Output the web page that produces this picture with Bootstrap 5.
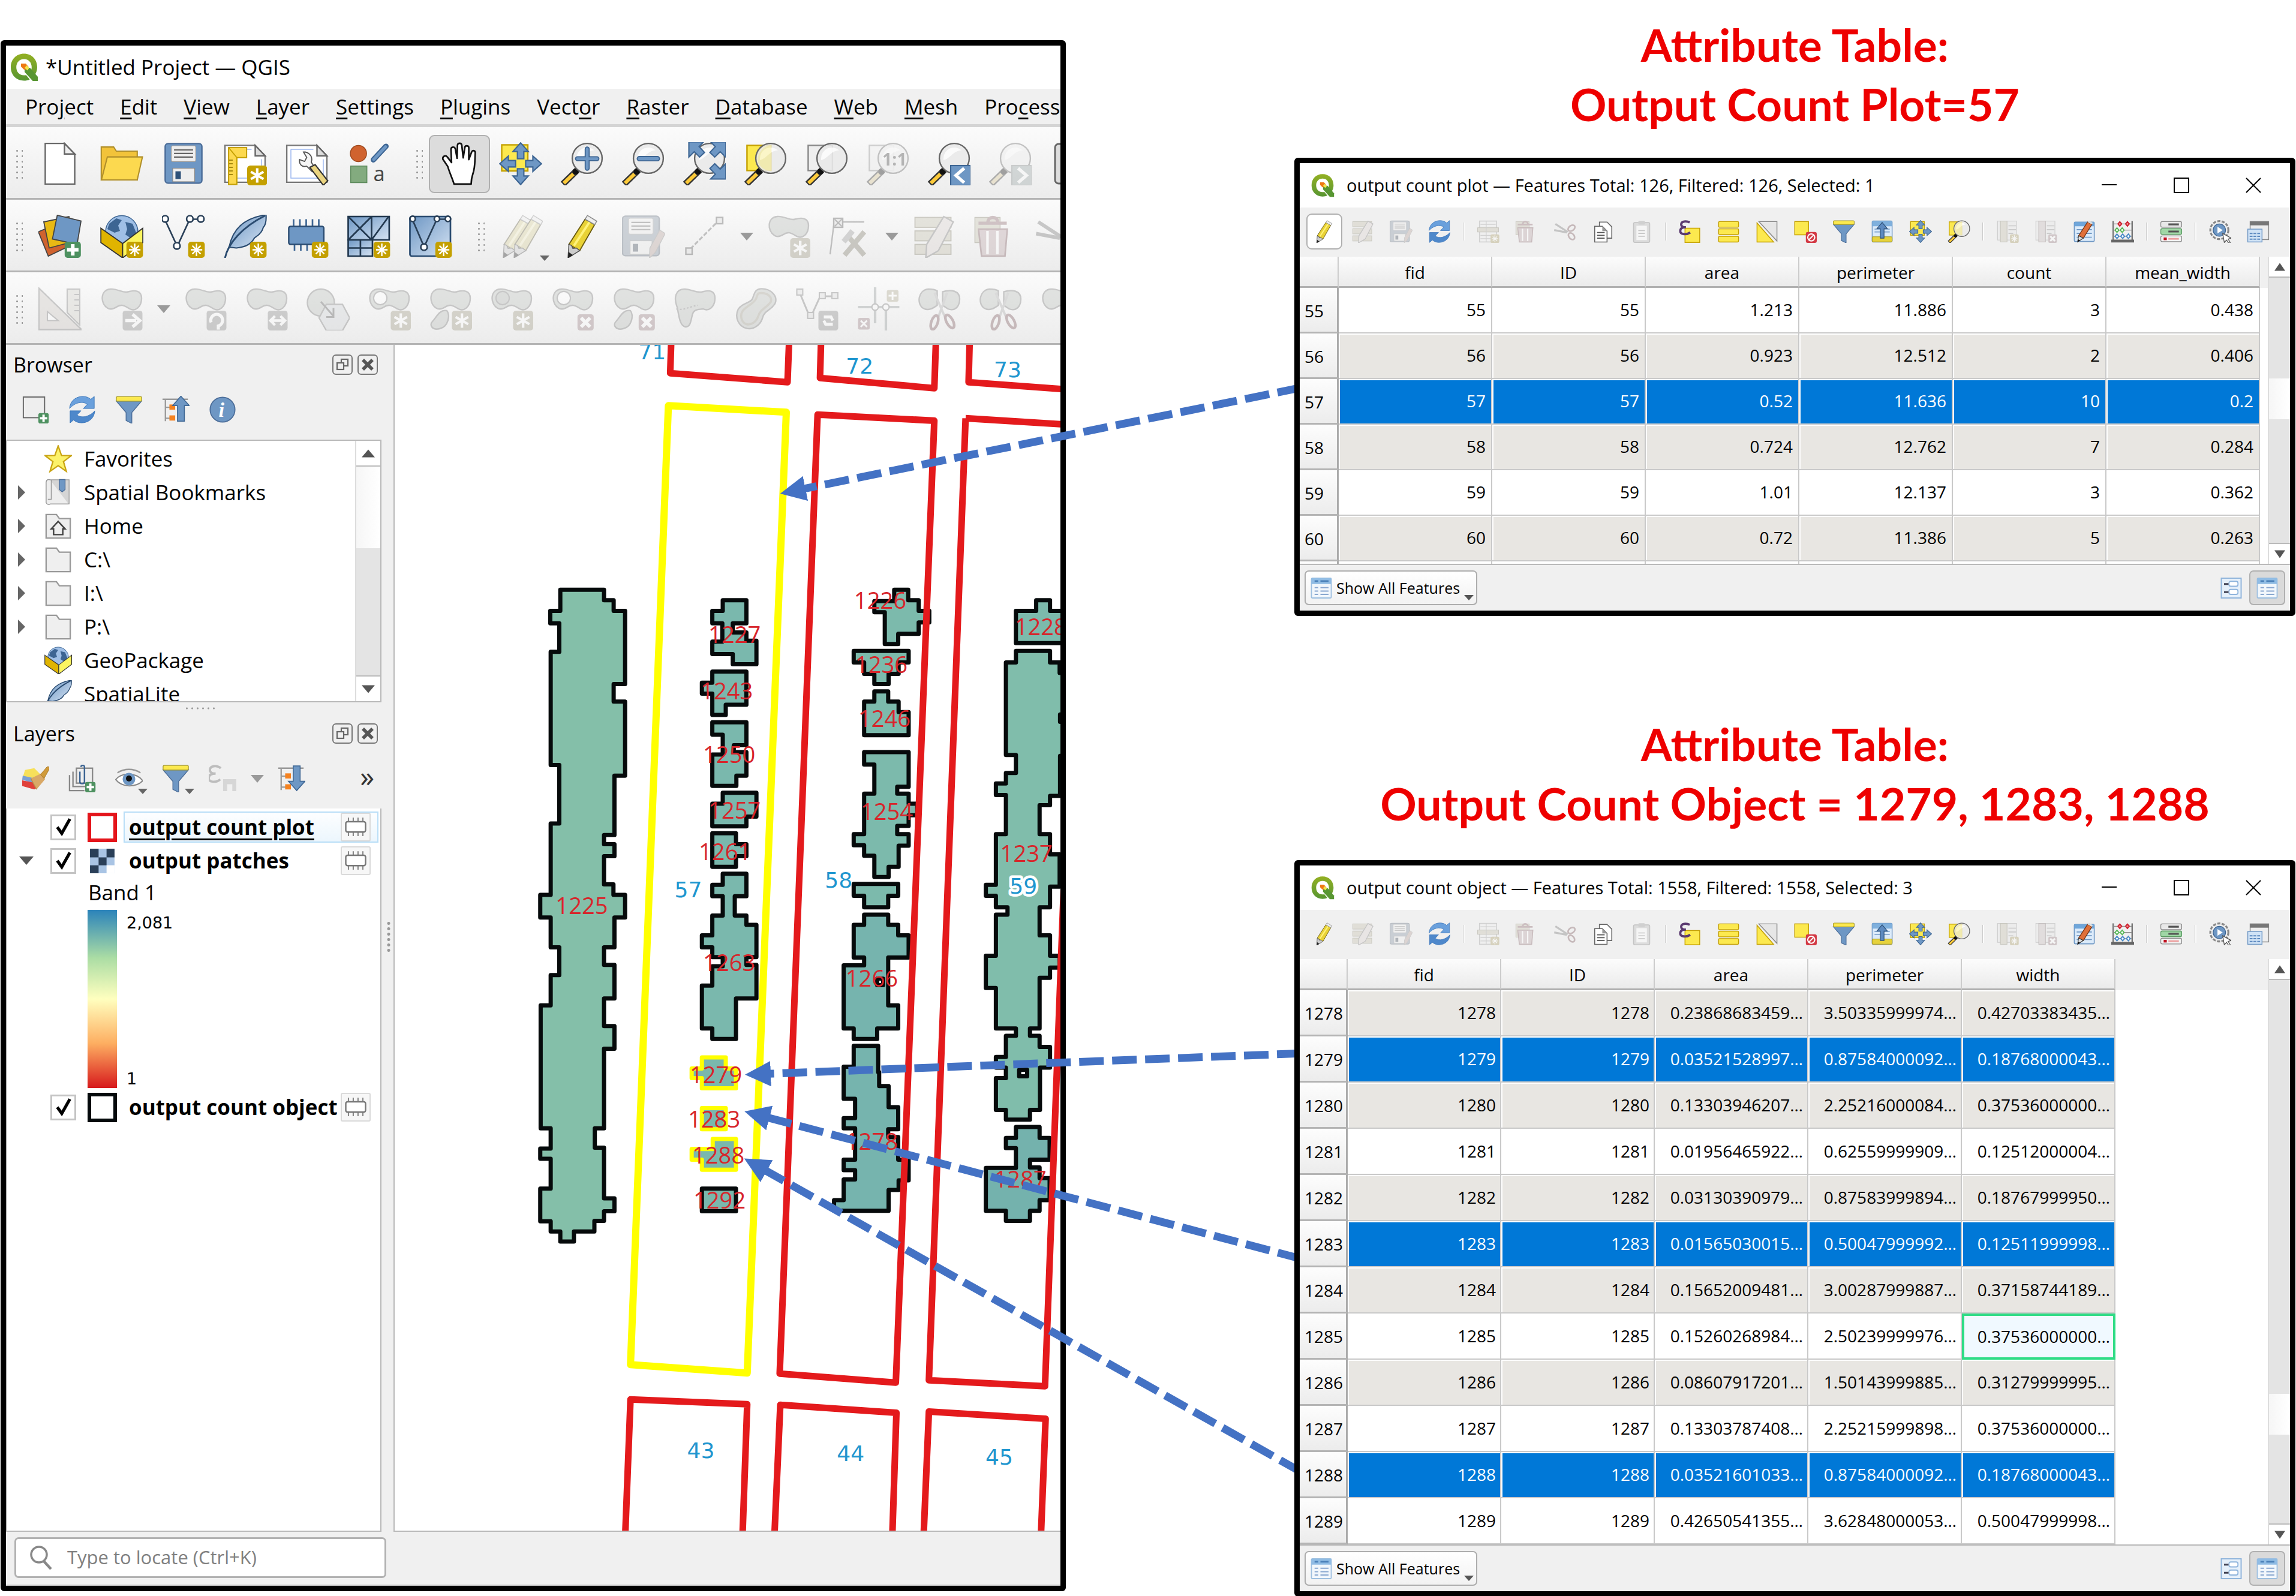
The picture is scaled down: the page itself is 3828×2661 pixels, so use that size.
<!DOCTYPE html>
<html lang="en">
<head>
<meta charset="utf-8">
<meta name="viewport" content="width=device-width, initial-scale=1">
<title>QGIS attribute tables</title>
<link rel="stylesheet" href="https://cdn.jsdelivr.net/npm/bootstrap@5.3.0/dist/css/bootstrap.min.css">
<script src="https://cdn.jsdelivr.net/npm/bootstrap@5.3.0/dist/js/bootstrap.bundle.min.js"></script>
<style>
:root{--face:#f0f0f0;--line:#b9b9b9}
body{font-family:"Open Sans","Noto Sans",sans-serif;font-size:35px;line-height:1.2;color:#000;background:#fff}
svg{display:block;overflow:visible}
button{color:inherit;font:inherit}
.stage{min-height:100vh}
.frame{border:9px solid #000;border-radius:6px;background:var(--face);overflow:hidden}
.main-win{width:46.4%;margin:67px 0 13px 1px}
.side-col{width:43.6%;margin:0 1px 4px auto;z-index:2}
.links{z-index:1;pointer-events:none}
.titlebar{height:72px;background:#fff;padding-left:6px;gap:12px}
.titlebar svg{width:48px;height:48px}
.menubar{height:64px;padding-left:10px;border-bottom:5px solid #d4d4d4}
.menubar a{color:#000;padding:0 22px;text-decoration:none;white-space:nowrap}
.menubar u{text-underline-offset:5px;text-decoration-thickness:3px}
.bar{height:121px;background:linear-gradient(#fbfbfb,#ececec);border-bottom:3px solid #b4b4b4;padding:4px 0 0 14px}
.grip{width:14px;height:52px;flex:none;margin:0 10px 0 0;background:radial-gradient(circle,#999 1px,transparent 2px) 0 0/9px 9px}
.grip.mid{margin:0 10px 0 25px}
.tb{width:103px;height:97px;flex:none;border:0;background:none;padding:0;display:flex;align-items:center;justify-content:center;position:relative}
.tb.tight{width:102px}
.tb svg{width:72px;height:72px}
.tb.on{background:#dcdcdc;border:2px solid #b0b0b0;border-radius:9px}
.dim{opacity:.36;filter:saturate(.35)}
.tri{width:38px;flex:none;display:flex;justify-content:center}
.tri::after,.corner::after{content:"";border:11px solid transparent;border-top:13px solid #9a9a9a;border-bottom:0}
.corner::after{position:absolute;right:4px;bottom:8px;border-width:8px;border-top:9px solid #666;border-bottom:0}
.dock{width:648px;flex:none;border-right:2px solid var(--line)}
.dock-title{height:66px;padding:0 26px 0 12px;gap:8px;font-size:34px}
.dock-title button{width:34px;height:34px;border:2px solid #777;border-radius:6px;padding:3px;background:none}
.dock-title button svg{width:24px;height:24px}
.dock-bar{height:92px;padding:0 24px 8px 10px}
.dock-bar .tb{width:78px;height:60px}
.dock-bar .tb svg{width:46px;height:46px}
.dock-bar .corner::after{right:8px;bottom:4px}
.dock-bar .tri{width:37px}
.more{font-size:48px;line-height:60px;color:#333;padding:0 8px 8px 0}
.treebox{background:#fff;border:2px solid var(--line);margin-right:20px;overflow:hidden}
.browser-tree{height:438px}
.tree{list-style:none;margin:0;padding:2px 0 0}
.tree li{height:56px;display:flex;align-items:center;white-space:nowrap}
.tree .twist{width:62px;padding-left:18px;flex:none}
.tree .twist svg{width:12px;height:24px}
.tree .ico{width:46px;height:46px;margin-right:20px;flex:none}
.sbar{width:42px;flex:none;background:#f4f4f4;border-left:2px solid #ddd}
.sbar span{display:block}
.sbtn{height:43px;background:#fff;border-bottom:2px solid #bbb;position:relative}
.sbtn::after{content:"";position:absolute;left:50%;top:50%;transform:translate(-50%,-50%);border:11px solid transparent;border-bottom:13px solid #555;border-top:0}
.sbtn.down{border-bottom:0;border-top:2px solid #bbb}
.sbtn.down::after{border:11px solid transparent;border-top:13px solid #555;border-bottom:0}
.groove{background:#e4e4e4}
.thumb{background:linear-gradient(90deg,#f6f6f6,#fff)}
.split-h{height:19px;margin:0 auto;width:52px;background:radial-gradient(circle,#999 1px,transparent 2px) 0 4px/9px 12px repeat-x}
.split-v{right:3px;top:960px;width:10px;height:56px;background:radial-gradient(circle,#999 2px,transparent 3px) 0 0/10px 9px}
.layers-tree{border-top:0;padding-top:3px}
.lrow{height:56px;display:flex;align-items:center}
.lrow .twist{width:72px;padding-left:20px;flex:none}
.lrow .twist svg{width:24px;height:14px}
.lrow input{appearance:none;width:43px;height:43px;border:3px solid #c4c4c4;background:#fff;margin:0 19px 0 0;flex:none}
.lrow input:checked{background:#fff url("data:image/svg+xml,%3Csvg xmlns='http://www.w3.org/2000/svg' viewBox='0 0 24 24'%3E%3Cpath d='M5 12l5 7 9-16' fill='none' stroke='%23000' stroke-width='3.4'/%3E%3C/svg%3E") center/36px no-repeat}
.swatch{width:49px;height:49px;flex:none;margin-right:11px}
.sq-red{border:6px solid #e4151b}
.sq-black{border:6px solid #050a0c}
.lname{flex:1;min-width:0;height:52px;margin-right:3px;padding:0 11px 0 7px;font-weight:700;border:2px solid transparent;display:flex;align-items:center;justify-content:space-between;white-space:nowrap}
.lname.cur{border-color:#b9def7;background:linear-gradient(#fdfeff,#ecf6fd)}
.lname.cur label{text-decoration:underline;text-underline-offset:6px;text-decoration-thickness:3px}
.memchip{width:50px;height:48px;flex:none;border:2px solid #dadada;border-radius:3px;background:#f7f7f7;padding:4px}
.memchip svg{width:38px;height:36px}
.band{height:54px;padding:4px 0 0 135px}
.ramp{height:297px;margin:0 0 4px 134px;gap:16px;font:27px/1 "DejaVu Sans",sans-serif}
.ramp i{width:49px;background:linear-gradient(#2b83ba,#abdda4 27%,#ffffbf 50%,#fdae61 75%,#d7191c)}
.ramp div{padding:8px 0 2px}
.mapview{background:#fff;border-bottom:2px solid var(--line);overflow:hidden;min-width:0;min-height:0}
.status{height:90px;padding:0 0 2px 14px;border-bottom:2px solid #c4c4c4}
.locate{width:620px;height:68px;background:#fff;border:3px solid #b2b2b2;border-radius:7px;padding:0 22px;gap:25px}
.locate svg{width:38px;height:40px;flex:none}
.locate input{border:0;outline:0;font-size:31px;width:100%;padding:0;background:none}
.locate input::placeholder{color:#808080;opacity:1}
.banner{font:700 75px/99px Lato,"Open Sans",sans-serif;color:#ee0000;text-align:center;margin:25px 0 40px}
.banner.second{margin:164px 0 45px}
.tw-title{height:74px;background:#fff;padding:0 48px 0 16px;font-size:29px;gap:18px}
.tw-title .logo{width:44px;height:40px}
.tw-title button{border:0;background:none;padding:0;margin-left:76px}
.tw-title button svg{width:26px;height:26px}
.tw-bar{height:82px;padding:0 0 3px 9px}
.tw-bar .tb{width:64px;height:60px}
.tw-bar .tb.on{background:#fff;width:60px;margin:0 2px}
.tw-bar .tb svg{width:38px;height:38px}
.vsep{width:3px;height:30px;background:#fafafa;border-left:1px solid #ccc;margin:0 7px;flex:none}
.gridwrap{background:#fff;border-bottom:2px solid var(--line);overflow:hidden;min-height:0}
.gridwrap.short{height:514px}
.gridbox{background:linear-gradient(var(--face) 52px,#fff 52px);overflow:hidden}
.attrs{table-layout:fixed;border-collapse:separate;border-spacing:0;width:0;font-size:28px;white-space:nowrap}
.attrs .rh{width:65px}
.attrs.wide .rh{width:80px}
.attrs .cc{width:256px}
.attrs thead th{height:52px;padding:4px 0 0;font-weight:400;text-align:center;background:linear-gradient(#fcfcfc,#ebebeb);border-right:2px solid #ccc;border-bottom:3px solid #b0b0b0}
.attrs tbody th{height:76px;font-weight:400;padding:4px 0 0 8px;background:linear-gradient(#fdfdfd,#ececec);border-right:3px solid #aaa;border-bottom:3px solid #b4b4b4}
.attrs td{height:76px;padding:0 9px 0 0;text-align:right;border-right:2px solid #c9c9c9;border-bottom:2px solid #c9c9c9;box-shadow:inset 2px 2px #fff;overflow:hidden}
.attrs.wide tbody th,.attrs.wide td{height:77px}
.attrs.wide td{padding-right:7px}
.attrs .alt td{background:#e8e6e2}
.attrs .sel td{background:#0078d7;color:#fff}
.attrs.wide td.focus-cell{border:4px solid #2fdc86;background:#f0f9ff;padding-right:5px;box-shadow:none}
.tw-foot{height:76px;padding:0 8px}
.showall{height:58px;width:288px;border:2px solid #adadad;border-radius:7px;background:linear-gradient(#fff,#f2f2f2);font-size:25px;padding:0 8px;gap:7px;position:relative;white-space:nowrap}
.showall svg,.viewb svg{width:36px;height:37px}
.showall::after{content:"";position:absolute;right:4px;bottom:6px;border:8px solid transparent;border-top:9px solid #555;border-bottom:0}
.viewb{width:60px;height:58px;border:2px solid transparent;border-radius:7px;background:none;padding:0 10px}
.viewb.on{background:#dadada;border-color:#b0b0b0}
.gridwrap .sbar{width:37px}
.gridwrap .sbtn{height:35px}
.gridwrap .sbtn::after{border-left-width:9px;border-right-width:9px}
.num{font:38px "Open Sans",sans-serif;fill:#d7252b;text-anchor:middle}
.plotno{font:36px "DejaVu Sans",sans-serif;fill:#1f96cf;text-anchor:middle}
.halo{stroke:#fff;stroke-width:9px;paint-order:stroke;stroke-linejoin:round}
.bld path{stroke:#060a0b;stroke-width:7;vector-effect:non-scaling-stroke;stroke-linejoin:round}
.bld path.pick{stroke:#ff0}
</style>
</head>
<body>
<svg width="0" height="0" class="position-absolute" aria-hidden="true">
<defs>
<linearGradient id="g-leaf" x1="0" y1="0" x2="1" y2="1"><stop offset="0" stop-color="#6e97c4"/><stop offset="1" stop-color="#d5e3f3"/></linearGradient>
<linearGradient id="g-q" x1="0" y1="0" x2="0" y2="1"><stop offset="0" stop-color="#93b023"/><stop offset="1" stop-color="#589632"/></linearGradient>
<symbol id="b-star" viewBox="0 0 24 24"><rect x="14.6" y="15" width="9.200" height="9" rx="1.600" fill="#c4a000"/><path d="M19.200 16v7M16 19.500h6.400M16.900 17.200l4.600 4.600M21.500 17.200l-4.600 4.600" stroke="#fff" stroke-width=".8"/></symbol>
<symbol id="b-plus" viewBox="0 0 24 24"><rect x="14.6" y="15" width="9" height="9" rx="1.600" fill="#4e9160"/><path d="M19.100 16.300v6.400M15.900 19.500h6.400" stroke="#fff" stroke-width="2"/></symbol>
<symbol id="b-x" viewBox="0 0 24 24"><rect x="14.6" y="15" width="9" height="9" rx="1.400" fill="#bf7480"/><path d="M16.600 17l5 5M21.600 17l-5 5" stroke="#fff" stroke-width="2"/></symbol>
<symbol id="i-q" viewBox="0 0 24 24"><path d="M12 .8C5.500.8 1 5.600 1 12s4.500 11.200 11 11.200c1.800 0 3.400-.3 4.800-1l-3-3.600c-.6.100-1.200.200-1.800.200-3.900 0-6.400-2.900-6.400-6.800S8.100 5.200 12 5.200s6.400 2.900 6.400 6.800c0 .9-.1 1.700-.4 2.500l3.300 3.500C22.400 16.300 23 14.300 23 12 23 5.600 18.500.8 12 .8z" fill="url(#g-q)"/><path d="M12.500 12.500h4.500l6.500 7.500v3.500h-4.200l-6.800-7.500z" fill="#589632"/><path d="M9.500 9h4l2.500 3-2.500 2h-1.500l-2.500-2.500z" fill="#ee7913"/><path d="M12.500 12.500l1.800-2 2 2.200-1.500 2z" fill="#f0e64a"/></symbol>
<symbol id="i-new" viewBox="0 0 24 24"><path d="M3.800.7H14.500L20.200 6.600V23.300H3.800z" fill="#fff" stroke="#666" stroke-width=".8"/><path d="M14.500.7V6.600H20.200z" fill="#eee" stroke="#666" stroke-width=".8"/></symbol>
<symbol id="i-open" viewBox="0 0 24 24"><g stroke="#b08f2a" stroke-width=".7"><path d="M.6 2.700H7.500L9 5H20.600V21H.6z" fill="#f2c33a"/><path d="M4 8.200H23.500L20.600 21H.7z" fill="#fcd94f"/></g></symbol>
<symbol id="i-save" viewBox="0 0 24 24"><rect x="1.800" y=".8" width="20.400" height="22" rx="1.600" fill="#6e97c4" stroke="#4a6c98" stroke-width=".8"/><rect x="5.200" y="2" width="13.600" height="8.800" rx=".8" fill="#eee" stroke="#999" stroke-width=".4"/><path d="M6.700 4.300h10.600M6.700 6.300h10.600M6.700 8.300h10.600" stroke="#666" stroke-width=".7"/><rect x="6" y="14.500" width="12.200" height="7.500" fill="#eee" stroke="#888" stroke-width=".4"/><rect x="7.500" y="16.200" width="3" height="4.300" fill="#2d5078"/></symbol>
<symbol id="i-sheet" viewBox="0 0 24 24"><path d="M.7 1.800H17.500L23 7.600V22.300H.7z" fill="#fff" stroke="#777" stroke-width=".8"/><path d="M17.500 1.800V7.600H23z" fill="#ddd" stroke="#666" stroke-width=".8"/><path d="M3 4H15.500M3 4V20H21V9.500" fill="none" stroke="#9db8f0" stroke-width=".5"/></symbol>
<symbol id="i-laynew" viewBox="0 0 24 24"><use href="#i-sheet"/><path d="M2.700 3h10v5.600H7.300V23.500H2.700z" fill="#fcd94f" stroke="#c4a000" stroke-width=".7"/><path d="M2.700 3l4.600 5.600" stroke="#c4a000" stroke-width=".6"/><path d="M3 10h2M3 12h2M3 14h2M3 16h2M3 18h2" stroke="#a68a10" stroke-width=".6"/><g transform="translate(.2 -1)"><rect x="12.800" y="14" width="11.200" height="11" rx="1.800" fill="#c4a000"/><path d="M18.400 15.500v8M14.900 17.500l7 4M14.900 21.500l7-4" stroke="#fff" stroke-width="1.400"/></g></symbol>
<symbol id="i-laymgr" viewBox="0 0 24 24"><use href="#i-sheet"/><path d="M11 5.500a4.300 4.300 0 0 0-1 0l1.800 3-1.200 2.200-2.800-1c-.3 3 1.700 4.300 4 3.700l3 3 1.800-1.800-2.300-3.500c1-2.500-.5-5-3.300-5.600z" fill="#f6f6f6" stroke="#555" stroke-width=".6"/><path d="M13.500 14l3-1.500 7 9-2.500 2.500z" fill="#ead480" stroke="#333" stroke-width=".7"/></symbol>
<symbol id="i-style" viewBox="0 0 24 24"><circle cx="6.200" cy="6.300" r="4.500" fill="#d0632f" stroke="#a04a1e" stroke-width=".5"/><path d="M14.500 9.800l7-7.500" stroke="#3d6593" stroke-width="3" stroke-linecap="round"/><path d="M14.700 9.600l6.600-7" stroke="#6e97c4" stroke-width="1.700" stroke-linecap="round"/><rect x="1.900" y="13.300" width="9" height="9.200" fill="#83ab7f" stroke="#5d8a5c" stroke-width=".5"/><text x="14.500" y="21.500" font-size="11.500" fill="#444">a</text></symbol>
<symbol id="i-hand" viewBox="0 0 24 24"><path d="M7 23.300C6 20 4.500 17 3.500 13.500L.8 9.500c-.3-1.600 1.300-2.500 2.500-1.200l2.300 3L5.300 4c0-1.500 2-1.700 2.400-.3l1 5.300L8.900 1.700c.1-1.400 2.200-1.400 2.400 0l.8 7L13 2.900c.2-1.300 2.200-1.100 2.200.2v6.600l1.600-4.300c.5-1.100 2.100-.7 2 .6C18.500 10 18.800 14 17.500 17.500c-.7 2-1 3.500-1 5.800z" transform="translate(2)" fill="#fff" stroke="#111" stroke-width=".9" stroke-linejoin="round"/></symbol>
<symbol id="i-pan" viewBox="0 0 24 24"><rect x="1.500" y="1.500" width="14.500" height="14.500" fill="#fce94f" stroke="#c4a000" stroke-width=".8"/><path id="p-arr" d="M12 .4l4.300 4.800h-2.500v4H10.200v-4H7.700z" fill="#6e97c4" stroke="#3d6593" stroke-width=".7"/><use href="#p-arr" transform="rotate(90 12 12)"/><use href="#p-arr" transform="rotate(180 12 12)"/><use href="#p-arr" transform="rotate(270 12 12)"/></symbol>
<symbol id="i-glass" viewBox="0 0 24 24"><path d="M9.500 15.500L1.500 23.300" stroke="#333" stroke-width="3.600"/><path d="M7.300 17.700L2 22.800" stroke="#fcca3a" stroke-width="2"/><circle cx="8.600" cy="16.300" r="1.700" fill="#111"/><circle cx="15" cy="9" r="8.300" fill="#e9e9e9" fill-opacity=".88" stroke="#666" stroke-width=".8"/><path d="M9 9a6 6 0 0 1 10-4.500C14 5 13 9 9 10z" fill="#fff" opacity=".8"/></symbol>
<symbol id="i-zin" viewBox="0 0 24 24"><use href="#i-glass"/><path d="M15 3.800v10.700M9.600 9.200h10.800" stroke="#3d6593" stroke-width="2.800" stroke-linecap="round"/><path d="M15 3.800v10.700M9.600 9.200h10.800" stroke="#6e97c4" stroke-width="1.600" stroke-linecap="round"/></symbol>
<symbol id="i-zout" viewBox="0 0 24 24"><use href="#i-glass"/><path d="M10 9.200h10" stroke="#3d6593" stroke-width="3" stroke-linecap="round"/><path d="M10 9.200h10" stroke="#6e97c4" stroke-width="1.800" stroke-linecap="round"/></symbol>
<symbol id="i-zfull" viewBox="0 0 24 24"><use href="#i-glass"/><g fill="#6e97c4" stroke="#3d6593" stroke-width=".7"><path d="M3.500-.2h8.200l-2.500 2.700 3 3.200-2.700 2.600-3-3-3 3z"/><path d="M24-.2h-8.400l2.600 2.700-3 3.200 2.700 2.600 3-3 3.100 3z"/><path d="M24 20.500h-8.400l2.600-2.700-3-3.200 2.700-2.600 3 3 3.100-3z"/></g></symbol>
<symbol id="i-zsel" viewBox="0 0 24 24"><rect x="1.800" y="1.800" width="13.500" height="14" fill="#fce94f" stroke="#c4a000" stroke-width=".8"/><use href="#i-glass"/><path d="M15.400 1.500v14.500a8 8 0 0 1-7.700-5.500 9 9 0 0 1 7.700-9z" fill="#fce94f" opacity=".28"/></symbol>
<symbol id="i-zlay" viewBox="0 0 24 24"><rect x="1.800" y="1.800" width="13.500" height="14" fill="#eee" stroke="#888" stroke-width=".8"/><use href="#i-glass"/></symbol>
<symbol id="i-z11" viewBox="0 0 24 24"><rect x="1.800" y="1.800" width="13.500" height="14" fill="#eee" stroke="#888" stroke-width=".8"/><use href="#i-glass"/><text x="9" y="13" font-size="9.500" font-weight="700" fill="#444">1:1</text></symbol>
<symbol id="i-zlast" viewBox="0 0 24 24"><use href="#i-glass"/><rect x="13" y="13" width="11" height="11" fill="#6e97c4" stroke="#3d6593" stroke-width=".7"/><path d="M20.500 14.500l-4.600 4 4.600 4" fill="none" stroke="#fff" stroke-width="1.800"/></symbol>
<symbol id="i-znext" viewBox="0 0 24 24"><use href="#i-glass"/><rect x="13" y="13" width="11" height="11" fill="#8aa" stroke="#788" stroke-width=".7"/><path d="M16.500 14.500l4.600 4-4.600 4" fill="none" stroke="#fff" stroke-width="1.800"/></symbol>
<symbol id="i-book" viewBox="0 0 24 24"><rect x="3" y="1" width="19" height="22" rx="2" fill="#ddd" stroke="#666"/></symbol>
<symbol id="i-dsm" viewBox="0 0 24 24"><g stroke="#444" stroke-width=".6"><path d="M0 9.500l12-5 7 12-13.500 6.500z" fill="#d0632f"/><path d="M3 4l14-3 2 14-13 3.500z" fill="#e8b914"/><path d="M10.500.3l13.200 3.200-2.200 13-13.700-3z" fill="#6e97c4"/></g><use href="#b-plus"/></symbol>
<symbol id="i-cube" viewBox="0 0 24 24"><circle cx="12" cy="9.500" r="9" fill="#9fbfe6" stroke="#3d6593" stroke-width=".5"/><path d="M5 5l4-3 3 1-2 3 1 3-3 1-4-2zM14 4l4 1 2 5-3 3-3-2 1-3z" fill="#3d6593"/><g stroke="#333" stroke-width=".6"><path d="M.4 7.500L12.500 16v8L.4 15.500z" fill="#e0b400"/><path d="M23.700 7.500L12.500 16v8l11.200-8.500z" fill="#fcf560"/></g></symbol>
<symbol id="i-gpkg" viewBox="0 0 24 24"><use href="#i-cube"/><use href="#b-star"/></symbol>
<symbol id="i-vnew" viewBox="0 0 24 24"><g fill="none" stroke="#2a4058" stroke-width=".9"><path d="M2 3.500l6 13M9 16.500l6-13M17 2.500h4"/><circle cx="1.800" cy="2.300" r="1.800" fill="#fff"/><circle cx="8.300" cy="17.300" r="1.800" fill="#fff"/><circle cx="15.500" cy="2.300" r="1.800" fill="#fff"/><circle cx="21.600" cy="2.300" r="1.800" fill="#fff"/></g><use href="#b-star"/></symbol>
<symbol id="i-feather" viewBox="0 0 24 24"><path d="M3 18C5 8 11 2 23.500 0c.3 4-.5 6-1.500 7-1 4-4 5-5 6-2 4-6 5-10 5.500z" fill="url(#g-leaf)" stroke="#2a4b70" stroke-width=".7"/><path d="M.7 24C2.500 16 10 7 23 .5" fill="none" stroke="#2a4b70" stroke-width="1"/></symbol>
<symbol id="i-featnew" viewBox="0 0 24 24"><use href="#i-feather"/><use href="#b-star"/></symbol>
<symbol id="i-chipnew" viewBox="0 0 24 24"><path d="M4.500 2.500v4M8 2.500v4M11.500 2.500v4M15 2.500v4M18.500 2.500v4M5 16v4M8.500 16v4M12 16v4" stroke="#3d6593" stroke-width=".9"/><rect x="1.800" y="6.500" width="19.500" height="10" rx="1" fill="#6e97c4" stroke="#2a4b70" stroke-width=".8"/><use href="#b-star"/></symbol>
<symbol id="i-mesh" viewBox="0 0 24 24"><g fill="url(#g-leaf)" stroke="#22384f" stroke-width=".9"><path d="M.5 1H23.300V14H.5z"/><path d="M.5 14h13.500v9H.5z"/><path d="M13.500 1V14M.5 1l13 13M13.500 1l-13 13M13.500 14L23 1M.5 18.500h13.500M7.300 14v9" fill="none"/></g><use href="#b-star"/></symbol>
<symbol id="i-virt" viewBox="0 0 24 24"><rect x=".5" y="1" width="22.500" height="22" rx="1" fill="url(#g-leaf)" stroke="#2a4b70" stroke-width=".9"/><g fill="none" stroke="#2a4058" stroke-width=".9"><path d="M2 3l6 14M9 16.500l6-13M17 2.500h4"/><circle cx="2" cy="2.300" r="1.500" fill="#fff"/><circle cx="8.300" cy="18" r="1.800" fill="#fff"/><circle cx="15.500" cy="2.300" r="1.500" fill="#fff"/><circle cx="21.600" cy="2.300" r="1.500" fill="#fff"/></g><use href="#b-star"/></symbol>
<symbol id="i-pencil" viewBox="0 0 24 24"><path d="M4.500 16.500L13.500 2.500l5.300 3L10.500 20z" fill="#e9d236" stroke="#6b5c10" stroke-width=".6"/><path d="M7.300 17.200L16 4" stroke="#fff27a" stroke-width="1.300"/><path d="M13.500 2.500L14.800.4 20 3.600l-1.200 1.900z" fill="#eee" stroke="#888" stroke-width=".5"/><path d="M4.500 16.500L4 24l6.500-4-1.800-1.500-2 .2-.8-1.700z" fill="#ccc" stroke="#555" stroke-width=".5"/><path d="M4 24l.3-3.300 2.500 1.800z" fill="#222"/></symbol>
<symbol id="i-pencils" viewBox="0 0 24 24"><g transform="translate(-2)"><use href="#i-pencil"/></g><g transform="translate(4)"><use href="#i-pencil"/></g></symbol>
<symbol id="i-savep" viewBox="0 0 24 24"><g transform="translate(-1.500)"><use href="#i-save"/></g><path d="M15.500 18.500l5.500-10 3 2-5.500 10.500-3.200 3z" fill="#d99c8c" stroke="#888" stroke-width=".5"/></symbol>
<symbol id="i-line" viewBox="0 0 24 24"><path d="M4 19L19 4" stroke="#666" stroke-width="1" stroke-dasharray="2.500 1"/><g fill="#ddd" stroke="#555" stroke-width=".8"><rect x="1.500" y="18.500" width="3.500" height="3.500"/><rect x="18.500" y="1.500" width="3.500" height="3.500"/></g></symbol>
<symbol id="i-blob" viewBox="0 0 24 24"><path d="M4 11.500C0 9 0 1.500 5.500 1c4-.5 7 2.500 10 1.500 4-1.200 7.500-.5 7.500 3.500 0 5-3.500 7.500-6.500 6-3-1.700-4.500-3-7.500-1-2 1.300-3.500 1.500-5 .5z" fill="#b5c0b5" stroke="#777" stroke-width=".8"/></symbol>
<symbol id="b-big" viewBox="0 0 24 24"><rect x="12.800" y="13" width="11.200" height="11" rx="1.600" fill="#a89a5c"/><path d="M18.400 14.500v8M14.900 16.500l7 4M14.900 20.500l7-4" stroke="#fff" stroke-width="1.400"/></symbol>
<symbol id="i-blobnew" viewBox="0 0 24 24"><use href="#i-blob"/><use href="#b-big"/></symbol>
<symbol id="i-vertex" viewBox="0 0 24 24"><path d="M3 4h17M3 6L1 22" stroke="#666" stroke-width=".8"/><rect x="3" y="2" width="5" height="5" fill="#ddd" stroke="#555" stroke-width=".8"/><path d="M3.500 2.500l4 4M7.500 2.500l-4 4" stroke="#555" stroke-width=".7"/><path d="M9 22.500l11-13M20 22.500L11 12" stroke="#8a7d50" stroke-width="2.800"/><path d="M8.500 15l5-6" stroke="#999" stroke-width="3"/></symbol>
<symbol id="i-form" viewBox="0 0 24 24"><g fill="#cbc28a" stroke="#8a7d40" stroke-width=".6"><rect x="1.500" y="1.500" width="20" height="5.500"/><rect x="1.500" y="9" width="20" height="5.500"/><rect x="1.500" y="16.500" width="20" height="5.500"/></g><g transform="translate(3.500 0)"><path d="M4.500 16.500L14 1l5.300 3L11 20l-7 4z" fill="#e6cfc8" stroke="#777" stroke-width=".8"/></g></symbol>
<symbol id="i-trash" viewBox="0 0 24 24"><rect x=".8" y="1.500" width="14" height="14" fill="#cbc28a" stroke="#8a7d40" stroke-width=".5"/><path d="M2.800 4.700H18.500M8 4.500c0-4 5.500-4 5.500 0" fill="none" stroke="#c05a6a" stroke-width="1.800"/><path d="M2.800 8H18.800L17.500 23H4.500z" fill="#dc9aa4" stroke="#b04a5a" stroke-width=".9"/><path d="M7.800 9v13M13.300 9v13" stroke="#fff" stroke-width="1.400"/></symbol>
<symbol id="i-cut" viewBox="0 0 24 24"><path d="M2 4l13 8.500M.8 10.500L14 13" stroke="#777" stroke-width="2"/><g fill="none" stroke="#b04a5a" stroke-width="1.700"><ellipse cx="19" cy="8.500" rx="4" ry="2.700" transform="rotate(-35 19 8.500)"/><ellipse cx="19" cy="17" rx="4" ry="2.700" transform="rotate(50 19 17)"/></g></symbol>
<symbol id="i-ruler" viewBox="0 0 24 24"><path d="M16 1h7v20l-7-7z" fill="#d6d2bd" stroke="#777" stroke-width=".7"/><path d="M.3.500V23.500H24z" fill="#d8c6b8" stroke="#777" stroke-width=".8"/><path d="M5 13.500v5h6z" fill="#fff" stroke="#777" stroke-width=".7"/><path d="M20 4h3M20 7h3M20 10h3M20 13h3" stroke="#777" stroke-width=".7"/></symbol>
<symbol id="i-bmove" viewBox="0 0 24 24"><use href="#i-blob"/><rect x="12.500" y="13" width="11" height="11" rx="1.500" fill="#888"/><path d="M14 18.500h6M18 15l4 3.500-4 3.500" stroke="#fff" stroke-width="1.800" fill="none"/></symbol>
<symbol id="i-brot" viewBox="0 0 24 24"><use href="#i-blob"/><rect x="12.500" y="13" width="11" height="11" rx="1.500" fill="#888"/><path d="M15 19.500a3.300 3.300 0 1 1 4 2v2" stroke="#fff" stroke-width="1.700" fill="none"/></symbol>
<symbol id="i-bscale" viewBox="0 0 24 24"><use href="#i-blob"/><rect x="12.500" y="13" width="11" height="11" rx="1.500" fill="#888"/><path d="M14 18.500h8M16.500 16L14 18.500l2.500 2.500M19.500 16l2.500 2.500-2.500 2.500" stroke="#fff" stroke-width="1.500" fill="none"/></symbol>
<symbol id="i-simp" viewBox="0 0 24 24"><circle cx="8" cy="8.500" r="7.500" fill="#b5c0b5" stroke="#777" stroke-width=".8"/><path d="M11 9.500h9l4 7.500-4 7h-9l-4-7z" fill="#c9d3de" stroke="#777" stroke-width=".8"/><path d="M8 8l7 8M15 11.500V16.500h-4" stroke="#555" stroke-width="1" fill="none"/></symbol>
<symbol id="i-ring" viewBox="0 0 24 24"><use href="#i-blob"/><circle cx="7" cy="6" r="3.700" fill="#fff" stroke="#777" stroke-width=".7"/><use href="#b-big"/></symbol>
<symbol id="i-part" viewBox="0 0 24 24"><use href="#i-blob"/><path d="M10 13c2 2 1 9-4 10-4 1-6-2-4-4s4-7 8-6z" fill="#b5c0b5" stroke="#777" stroke-width=".8"/><use href="#b-big"/></symbol>
<symbol id="i-fring" viewBox="0 0 24 24"><use href="#i-blob"/><circle cx="7" cy="6" r="3.700" fill="#a8b4a8" stroke="#777" stroke-width=".7"/><use href="#b-big"/></symbol>
<symbol id="i-dring" viewBox="0 0 24 24"><use href="#i-blob"/><circle cx="7" cy="6" r="3.700" fill="#fff" stroke="#777" stroke-width=".7"/><use href="#b-x"/></symbol>
<symbol id="i-dpart" viewBox="0 0 24 24"><use href="#i-blob"/><path d="M10 13c2 2 1 9-4 10-4 1-6-2-4-4s4-7 8-6z" fill="#b5c0b5" stroke="#777" stroke-width=".8"/><use href="#b-x"/></symbol>
<symbol id="i-resh" viewBox="0 0 24 24"><path d="M2 11C0 6 1 1 6 1c4 0 7 2.500 10 1.500 4-1.200 7-.5 7 3.500 0 5-3.500 7.500-6.500 6-3 .5-5 0-6 3-1 4-1 7-4 7-3-.5-3.500-6-4.500-11z" fill="#b5c0b5" stroke="#777" stroke-width=".8"/><path d="M1.500 12c5 1 6-1 12-2" fill="none" stroke="#777" stroke-width=".7" stroke-dasharray="1 1"/></symbol>
<symbol id="i-offs" viewBox="0 0 24 24"><path d="M15 .8c5 0 9 4 7.500 8-2 4-6 4-7 8-1 4-5 7-9 6S-.5 17 2 12c3-4 7-3 8-6s1.500-5.200 5-5.200z" fill="#b5c0b5" stroke="#777" stroke-width=".8"/><path d="M15 3.200c3 0 6 2 5 5-2 3-6 4-7 8-1 3-4 5-6.500 4.300S2.500 16 4.500 13C7 10 11 9 12 6s1-2.800 3-2.800z" fill="none" stroke="#a89d70" stroke-width="1.200"/></symbol>
<symbol id="i-vrot" viewBox="0 0 24 24"><path d="M2.500 4l5 12M8.500 16l5-11M15 5h5" stroke="#777" stroke-width="1"/><g fill="#ddd" stroke="#777" stroke-width=".7"><rect x=".5" y="1" width="3.300" height="3.300"/><rect x="6.500" y="14" width="3.300" height="3.300"/><rect x="13" y="3" width="3.300" height="3.300"/><rect x="20" y="3" width="3.300" height="3.300"/></g><rect x="12.500" y="13" width="11" height="11" rx="1.500" fill="#888"/><path d="M15.500 16.500h4l1 2M20.500 20.500h-4l-1-2" stroke="#fff" stroke-width="1.600" fill="none"/></symbol>
<symbol id="i-merge" viewBox="0 0 24 24"><path d="M10 0v12M.5 11h23M10 12v8M16 12v12" stroke="#8a9a9a" stroke-width="1.400"/><circle cx="10" cy="11" r="1.800" fill="#fff" stroke="#777" stroke-width=".7"/><circle cx="16" cy="11" r="1.800" fill="#fff" stroke="#777" stroke-width=".7"/><rect x="16.500" y="1.500" width="6.500" height="6.500" rx="1" fill="#b8a860"/><path d="M19.700 2.500v4.500M17.500 4.700h4.500" stroke="#fff"/><rect x=".5" y="17" width="6.500" height="6.500" rx="1" fill="#bf7480"/><path d="M2 18.500l3.500 3.500M5.500 18.500L2 22" stroke="#fff"/></symbol>
<symbol id="i-splitf" viewBox="0 0 24 24"><path d="M5.500 1C0 1.500-1 9 2.500 11.500c3 2 6 0 8-1.500V2C9 1 7 1 5.500 1zM13.500 2.500c5-1.500 9.500-.5 9.500 4s-3 7-6.500 5.500l-3-2z" fill="#b5c0b5" stroke="#777" stroke-width=".8"/><path d="M9 3l6 14M16 3l-5 14" stroke="#aaa" stroke-width="1.300"/><g fill="none" stroke="#b04a5a" stroke-width="1.500"><ellipse cx="9" cy="19.500" rx="1.800" ry="4" transform="rotate(18 9 19.500)"/><ellipse cx="17.500" cy="19" rx="1.800" ry="4" transform="rotate(-28 17.500 19)"/></g></symbol>
<symbol id="i-addsel" viewBox="0 0 24 24"><rect x="1.500" y="1" width="18.500" height="18" fill="#eee" stroke="#666" stroke-width="1"/><use href="#b-plus"/></symbol>
<symbol id="i-refresh" viewBox="0 0 24 24"><path d="M1 11C1.500 4 7 .5 12.500.5c3 0 5.300 1 7 2.500L22.500.5V11H13l3.500-3.700C12.500 4.500 6 5.500 1 11z" fill="#6aa0dc" stroke="#3b76ba" stroke-width=".5"/><path d="M23 13c-.5 7-6 10.500-11.500 10.500-3 0-5.300-1-7-2.500L1.500 23.500V13H11l-3.500 3.700c4 2.800 10.500 1.800 15.500-3.700z" fill="#4e88cb" stroke="#3b76ba" stroke-width=".5"/></symbol>
<symbol id="i-filter" viewBox="0 0 24 24"><path d="M1 4.500H23L14.500 14.500V24l-5-2.500V14.500z" fill="#6e97c4" stroke="#4a6c98" stroke-width=".7"/><rect x="1" y=".6" width="22" height="4" rx="1" fill="#fce94f" stroke="#a69a2a" stroke-width=".7"/></symbol>
<symbol id="i-collapse" viewBox="0 0 24 24"><path d="M.5 3h22M3 3v19M3 10h5M3 19.500h5" stroke="#999" stroke-width="1.200" fill="none"/><rect x="6.500" y="7.500" width="5" height="4.500" fill="#f58220"/><rect x="6.500" y="17" width="5" height="4.500" fill="#f58220"/><path d="M16.500.3l7.300 8.200h-4.300V22h-6V8.500H9.300z" fill="#6e97c4" stroke="#3d6593" stroke-width=".8"/></symbol>
<symbol id="i-expand" viewBox="0 0 24 24"><path d="M.5 3h22M3 3v19M3 10h5M3 19.500h5" stroke="#999" stroke-width="1.200" fill="none"/><rect x="6.500" y="7.500" width="5" height="4.500" fill="#f58220"/><rect x="6.500" y="17" width="5" height="4.500" fill="#f58220"/><path d="M16.500 22.500l7.300-8.200h-4.300V1h-6v13.300H9.300z" fill="#6e97c4" stroke="#3d6593" stroke-width=".8"/></symbol>
<symbol id="i-info" viewBox="0 0 24 24"><circle cx="12" cy="12" r="10.800" fill="#6e97c4" stroke="#4a6c98" stroke-width=".9"/><text x="8.600" y="18.500" font-family="Liberation Serif,serif" font-size="18" font-style="italic" font-weight="700" fill="#fff">i</text></symbol>
<symbol id="i-star" viewBox="0 0 24 24"><path d="M12 .8l2.900 8.300 8.500.1-6.800 5.200 2.500 8.500L12 17.900l-7.100 5 2.500-8.500L.6 9.200l8.500-.1z" fill="#fcf26a" stroke="#c9a414" stroke-width="1.200"/></symbol>
<symbol id="i-bmk" viewBox="0 0 24 24"><path d="M5 1h16.500v21H5z" fill="#d5d5d5" stroke="#999" stroke-width=".7"/><path d="M5 1C3 .5 1.800 1 1.500 3v18c1 2 3 1.500 4 1H21" fill="#eee" stroke="#999" stroke-width=".8"/><path d="M6 1v17H3" fill="none" stroke="#999" stroke-width=".8"/><path d="M13 .8h5V9.500l-2.500 2-2.500-2z" fill="#6e97c4" stroke="#4a6c98" stroke-width=".7"/></symbol>
<symbol id="i-dir" viewBox="0 0 24 24"><path d="M1.500 2h9l2.500 3.500h9.500V22.500h-21z" fill="#efefef" stroke="#999" stroke-width="1.200"/></symbol>
<symbol id="i-home" viewBox="0 0 24 24"><use href="#i-dir"/><path d="M6 14.500l6-6.500 6 6.500h-2V19.500H8V14.500z" fill="none" stroke="#444" stroke-width="1.300"/></symbol>
<symbol id="i-brush" viewBox="0 0 24 24"><path d="M3 4.500l8-1.500 5 5-5 5-10-2z" fill="#f7e05a"/><path d="M1 9.500l11 2.500-2 4-9.500-3z" fill="#7ba0d6"/><path d="M.5 13.500l10 2 3.500 4.500-3 1.500-10.500-3z" fill="#e0403a"/><path d="M8 12l9-4.500 3.500 5L13 21.500z" fill="#d9a866"/><path d="M8 12l5 9.500" stroke="#b98a4a" stroke-width=".8"/><path d="M16.500 8.500L22 2c1.500-1 3 .5 2 2L19.500 12z" fill="#d09a3a" stroke="#a87a2a" stroke-width=".5"/></symbol>
<symbol id="i-addgrp" viewBox="0 0 24 24"><g fill="#eee" stroke="#888" stroke-width="1.200"><path d="M1 9V22.500H14"/><path d="M4 6V19H17"/><rect x="7" y="3" width="14" height="13"/></g><path d="M10 6v9c0 2 4 2 4 0V2c0-2-3-2-3 0" fill="none" stroke="#3d6593" stroke-width="1.300"/><use href="#b-plus"/></symbol>
<symbol id="i-eye" viewBox="0 0 24 24"><path d="M.5 13C5 7 18 6 24 14 18 20 6 20 .5 13z" fill="#fff" stroke="#888" stroke-width="1.100"/><path d="M2 7C8 3 16 3 22 7" fill="none" stroke="#999" stroke-width="1.300"/><circle cx="12" cy="12.500" r="5.500" fill="#6e97c4"/><circle cx="12" cy="12" r="2.600" fill="#111"/></symbol>
<symbol id="i-eps" viewBox="0 0 24 24"><path d="M10.500 3C7 0 1 1 1 4.500c0 2 2 3.200 5 3.200-4 0-6 1.300-6 4 0 4 7 4 10 1" fill="none" stroke="#666" stroke-width="2"/><path d="M12.500 12.500h11.500v10.500h-3.500v-6h-4.500v6h-3.500z" fill="#aaa"/></symbol>
<symbol id="i-chip" viewBox="0 0 24 24"><path d="M4 1.500v5M9.300 1.500v5M14.600 1.500v5M20 1.500v5M4 17v5M9.300 17v5M14.600 17v5M20 17v5" stroke="#888" stroke-width="1.400"/><rect x="1" y="6" width="22" height="11.500" rx="2" fill="#fff" stroke="#777" stroke-width="1.600"/></symbol>
<symbol id="i-raster" viewBox="0 0 24 24"><path d="M2 2h20v20H2z" fill="#a9c4e4"/><path d="M2 2h7v7H2zM15.500 2H22v7h-6.500zM9 9h6.500v6.500H9zM2 15.500h7V22H2z" fill="#2a3f58"/><path d="M15.500 15.500H22V22h-6.500z" fill="#fff"/></symbol>
<symbol id="i-tri-r" viewBox="0 0 12 24"><path d="M0 0v24l12-12z" fill="#666"/></symbol>
<symbol id="i-tri-d" viewBox="0 0 24 14"><path d="M0 0h24L12 14z" fill="#555"/></symbol>
<symbol id="i-float" viewBox="0 0 24 24"><g fill="none" stroke="#666" stroke-width="2.200"><rect x="10" y="3" width="11" height="11"/><rect x="3" y="9" width="11" height="11" fill="#f0f0f0"/></g></symbol>
<symbol id="i-close" viewBox="0 0 24 24"><path d="M4 4l16 16M20 4L4 20" stroke="#555" stroke-width="5.500"/></symbol>
<symbol id="i-addfeat" viewBox="0 0 24 24"><rect x="3" y="1" width="18" height="22" fill="#eee" stroke="#999"/><rect x="1" y="8" width="22" height="4.500" fill="#cbc28a" stroke="#8a7d40" stroke-width=".6"/><path d="M4 4.500h16M4 16h12M4 19.500h12M10 1v22" stroke="#999" stroke-width=".8"/><use href="#b-star"/></symbol>
<symbol id="i-copy" viewBox="0 0 24 24"><g fill="#fff" stroke="#666" stroke-width="1"><path d="M8 2h8l5 5v12H8z"/><path d="M3 6.500h8l5 5V23H3z"/></g><path d="M5.500 13h8M5.500 16h8M5.500 19h8" stroke="#555" stroke-width="1.100"/><path d="M11 6.500l5 5h-5z" fill="#999"/></symbol>
<symbol id="i-paste" viewBox="0 0 24 24"><rect x="3.500" y="2.500" width="17" height="21" rx="1.500" fill="#bbb" stroke="#777"/><path d="M6.500 6h11v15h-11z" fill="#fff"/><rect x="8.500" y=".8" width="7" height="4" rx="1" fill="#999"/><path d="M8.500 11h7M8.500 14h7M8.500 17h7" stroke="#777"/></symbol>
<symbol id="i-epssel" viewBox="0 0 24 24"><rect x="6.500" y="8.500" width="15.500" height="15" fill="#fce94f" stroke="#c4a000" stroke-width=".9"/><path d="M11.500 2.500C8 .5 2.500 1 2.500 4.500c0 2 2 3 5 3-4 0-6 1.200-6 4 0 4 7 4 10.500 1.500" fill="none" stroke="#5b3a70" stroke-width="2.400"/></symbol>
<symbol id="i-selall" viewBox="0 0 24 24"><g fill="#fce94f" stroke="#c4a000" stroke-width=".9"><rect x="1.500" y="1.500" width="21" height="6" rx="1"/><rect x="1.500" y="9.200" width="21" height="6" rx="1"/><rect x="1.500" y="17" width="21" height="6" rx="1"/></g></symbol>
<symbol id="i-invert" viewBox="0 0 24 24"><path d="M1.500 3v20H19z" fill="#fce94f" stroke="#c4a000" stroke-width=".9"/><path d="M3.500 1.500H22.500V22z" fill="#e6e6e6" stroke="#888" stroke-width=".9"/></symbol>
<symbol id="i-desel" viewBox="0 0 24 24"><rect x=".8" y="1.500" width="14.500" height="14" fill="#fce94f" stroke="#c4a000" stroke-width=".9"/><rect x="12.500" y="12.500" width="11.500" height="11.500" rx="2" fill="#d33a45"/><circle cx="18.200" cy="18.200" r="3.700" fill="none" stroke="#fff" stroke-width="1.300"/><path d="M15.700 20.700l5-5" stroke="#fff" stroke-width="1.300"/></symbol>
<symbol id="i-movetop" viewBox="0 0 24 24"><rect x="1.500" y="1" width="21" height="22" rx="1" fill="#dcebfa" stroke="#6e97c4" stroke-width=".9"/><path d="M1.500 1h21v5.500h-21z" fill="#7fb0dd"/><path d="M4 9.500h16M4 12.500h16" stroke="#6e97c4"/><rect x="1.500" y="17.500" width="21" height="5.500" rx="1" fill="#e6d23c" stroke="#a69a2a" stroke-width=".7"/><path d="M12 2.500l5.500 6.500h-3.500v10h-4V9H6.500z" fill="#5d8ac0" stroke="#2a4b70" stroke-width=".7"/></symbol>
<symbol id="i-newfld" viewBox="0 0 24 24"><rect x="1.500" y="1" width="20" height="20" fill="#e6e6e6" stroke="#999" stroke-width=".8"/><rect x="4.500" y="1" width="7" height="22" fill="#cbc28a" stroke="#8a7d40" stroke-width=".7"/><path d="M13 6h8M13 10h8M13 14h5" stroke="#888"/><use href="#b-star"/></symbol>
<symbol id="i-delfld" viewBox="0 0 24 24"><rect x="1.500" y="1" width="20" height="20" fill="#e6e6e6" stroke="#999" stroke-width=".8"/><rect x="4.500" y="1" width="7" height="22" fill="#d8b8b8" stroke="#8a6060" stroke-width=".7"/><path d="M13 6h8M13 10h8M13 14h5" stroke="#888"/><use href="#b-x"/></symbol>
<symbol id="i-edcol" viewBox="0 0 24 24"><rect x="1.500" y="2" width="21" height="20.500" rx="1" fill="#dcebfa" stroke="#6e97c4"/><path d="M1.500 2h21v4.500h-21z" fill="#6fa6da"/><path d="M4 10h16M4 14h16M4 18h16" stroke="#6e97c4" stroke-width="1.100"/><path d="M6 16.500L15.500 2l4.500 2.500L11 19z" fill="#e0703a" stroke="#7a3412" stroke-width=".8"/><path d="M15.500 2L17 .3l4 2.700-1 1.500z" fill="#ddd"/><path d="M6 16.500L5 23l6-4z" fill="#ddd" stroke="#333" stroke-width=".7"/><path d="M5 23l.5-3 2 1.500z" fill="#111"/></symbol>
<symbol id="i-abacus" viewBox="0 0 24 24"><path d="M2 1v20M22 1v20" stroke="#777" stroke-width="1.500"/><path d="M0 22h24" stroke="#666" stroke-width="3"/><path d="M2 4h20M2 10.500h20M2 17h20" stroke="#888" stroke-width=".8"/><g stroke-width="1.200" fill="#fff"><path d="M7 4l2-2.300L11 4 9 6.300zM15 4l2-2.300L19 4l-2 2.300z" stroke="#cc2230" fill="#e88"/><path d="M4 10.500l2-2.300 2 2.300-2 2.300zM9.500 10.500l2-2.300 2 2.300-2 2.300z" stroke="#58b858"/><path d="M4 17l2-2.300L8 17l-2 2.300zM10 17l2-2.300L14 17l-2 2.300zM16 17l2-2.300L20 17l-2 2.300z" stroke="#4a8ac8"/></g></symbol>
<symbol id="i-cond" viewBox="0 0 24 24"><g stroke-width=".8"><rect x="1" y="1.500" width="22" height="6" rx="1.500" fill="#e8e8e8" stroke="#888"/><rect x="1" y="9" width="22" height="6" rx="1.500" fill="#9fd6a5" stroke="#5a9a62"/><rect x="1" y="16.700" width="22" height="6" rx="1.500" fill="#f4f4f4" stroke="#888"/></g><path d="M9 4.500h11M9 12h11" stroke="#555" stroke-width="2"/><rect x="4" y="18.300" width="3.300" height="2.800" fill="#c01020"/><path d="M9 19.700h11" stroke="#eba0a0" stroke-width="1.800"/></symbol>
<symbol id="i-action" viewBox="0 0 24 24"><circle cx="11.500" cy="10.500" r="9.300" fill="#eee" stroke="#888" stroke-width="2.400" stroke-dasharray="3.200 1.400"/><circle cx="11.500" cy="10.500" r="8.500" fill="#eee"/><circle cx="11.500" cy="10.500" r="6.500" fill="#6e97c4" stroke="#3d6593" stroke-width=".8"/><path d="M9.500 7v7l5.500-3.500z" fill="#fff"/><path d="M15 14l9 5-3.300 1 2.300 3.500-1.500 1-2.400-3.500-2.400 2.500z" fill="#fff" stroke="#555" stroke-width=".8"/></symbol>
<symbol id="i-dockw" viewBox="0 0 24 24"><rect x="3.500" y="1.500" width="19.500" height="19" fill="#eee" stroke="#888" stroke-width=".9"/><rect x="3.500" y="1.500" width="19.500" height="4" fill="#777"/><rect x="1" y="9.500" width="15" height="13.500" fill="#cfe2f5" stroke="#6e97c4" stroke-width=".9"/><path d="M3 14h11M3 17h11M3 20h11" stroke="#5d8ac0" stroke-width="1.300" stroke-dasharray="3 1"/></symbol>
<symbol id="i-formv" viewBox="0 0 24 24"><rect x="1" y="1" width="22" height="22" fill="#e6f0fa" stroke="#8fb4dc" stroke-width="1.300"/><g fill="#fff" stroke="#8fb4dc" stroke-width="1.200"><rect x="9.500" y="4.500" width="10" height="5.500" rx="2"/><rect x="9.500" y="13.500" width="10" height="5.500" rx="2"/></g><path d="M4 7.500h5M4 16.500h5" stroke="#445" stroke-width="2"/></symbol>
<symbol id="i-tablev" viewBox="0 0 24 24"><rect x="1" y="1" width="22" height="22" rx="1" fill="#f2f7fc" stroke="#9dbfe0" stroke-width="1.200"/><path d="M1 1h22v6.500H1z" fill="#90bce4"/><path d="M4.500 4.300h4M11 4.300h9" stroke="#4a80b8" stroke-width="1.800"/><path d="M4.500 11.500h4M11 11.500h9M4.500 15.300h4M11 15.300h9M4.500 19h4M11 19h9" stroke="#8aa8d0" stroke-width="1.300"/></symbol>
<symbol id="i-min" viewBox="0 0 26 26"><path d="M0 12h25" stroke="#000" stroke-width="2"/></symbol>
<symbol id="i-max" viewBox="0 0 26 26"><rect x="1" y="1" width="24" height="24" fill="none" stroke="#000" stroke-width="2"/></symbol>
<symbol id="i-x" viewBox="0 0 26 26"><path d="M1 1l24 24M25 1L1 25" stroke="#000" stroke-width="2"/></symbol>
</defs>
</svg>

<main class="stage d-flex position-relative">
<section class="frame main-win d-flex flex-column" aria-label="QGIS">
  <header class="titlebar d-flex align-items-center flex-shrink-0"><svg><use href="#i-q"/></svg><span>*Untitled Project — QGIS</span></header>
  <nav class="menubar d-flex align-items-center flex-shrink-0">
    <a href="#">Pro<u>j</u>ect</a><a href="#"><u>E</u>dit</a><a href="#"><u>V</u>iew</a><a href="#"><u>L</u>ayer</a><a href="#"><u>S</u>ettings</a><a href="#"><u>P</u>lugins</a><a href="#">Vect<u>o</u>r</a><a href="#"><u>R</u>aster</a><a href="#"><u>D</u>atabase</a><a href="#"><u>W</u>eb</a><a href="#"><u>M</u>esh</a><a href="#">Pro<u>c</u>essing</a>
  </nav>
  <div class="bar d-flex align-items-center flex-shrink-0" role="toolbar">
    <span class="grip"></span>
    <button class="tb" aria-label="New"><svg><use href="#i-new"/></svg></button><button class="tb" aria-label="Open"><svg><use href="#i-open"/></svg></button><button class="tb" aria-label="Save"><svg><use href="#i-save"/></svg></button><button class="tb" aria-label="New layout"><svg><use href="#i-laynew"/></svg></button><button class="tb" aria-label="Layout manager"><svg><use href="#i-laymgr"/></svg></button><button class="tb" aria-label="Style manager"><svg><use href="#i-style"/></svg></button>
    <span class="grip mid"></span>
    <button class="tb tight on" aria-label="Pan"><svg><use href="#i-hand"/></svg></button><button class="tb tight" aria-label="Pan to selection"><svg><use href="#i-pan"/></svg></button><button class="tb tight" aria-label="Zoom in"><svg><use href="#i-zin"/></svg></button><button class="tb tight" aria-label="Zoom out"><svg><use href="#i-zout"/></svg></button><button class="tb tight" aria-label="Zoom full"><svg><use href="#i-zfull"/></svg></button><button class="tb tight" aria-label="Zoom to selection"><svg><use href="#i-zsel"/></svg></button><button class="tb tight" aria-label="Zoom to layer"><svg><use href="#i-zlay"/></svg></button><button class="tb tight" aria-label="Native resolution"><svg class="dim"><use href="#i-z11"/></svg></button><button class="tb tight" aria-label="Zoom last"><svg><use href="#i-zlast"/></svg></button><button class="tb tight" aria-label="Zoom next"><svg class="dim"><use href="#i-znext"/></svg></button><button class="tb tight" aria-label="Bookmarks"><svg><use href="#i-book"/></svg></button>
  </div>
  <div class="bar d-flex align-items-center flex-shrink-0" role="toolbar">
    <span class="grip"></span>
    <button class="tb" aria-label="Data sources"><svg><use href="#i-dsm"/></svg></button><button class="tb" aria-label="New GeoPackage"><svg><use href="#i-gpkg"/></svg></button><button class="tb" aria-label="New shapefile"><svg><use href="#i-vnew"/></svg></button><button class="tb" aria-label="New SpatiaLite"><svg><use href="#i-featnew"/></svg></button><button class="tb" aria-label="New scratch layer"><svg><use href="#i-chipnew"/></svg></button><button class="tb" aria-label="New mesh"><svg><use href="#i-mesh"/></svg></button><button class="tb" aria-label="New virtual layer"><svg><use href="#i-virt"/></svg></button>
    <span class="grip mid"></span>
    <button class="tb tight corner" aria-label="Current edits"><svg class="dim"><use href="#i-pencils"/></svg></button><button class="tb tight" aria-label="Toggle editing"><svg><use href="#i-pencil"/></svg></button><button class="tb tight" aria-label="Save edits"><svg class="dim"><use href="#i-savep"/></svg></button><button class="tb tight" aria-label="Digitize"><svg class="dim"><use href="#i-line"/></svg></button><span class="tri"></span><button class="tb tight" aria-label="Add polygon"><svg class="dim"><use href="#i-blobnew"/></svg></button><button class="tb tight" aria-label="Vertex tool"><svg class="dim"><use href="#i-vertex"/></svg></button><span class="tri"></span><button class="tb tight" aria-label="Modify attributes"><svg class="dim"><use href="#i-form"/></svg></button><button class="tb tight" aria-label="Delete"><svg class="dim"><use href="#i-trash"/></svg></button><button class="tb tight" aria-label="Cut"><svg class="dim"><use href="#i-cut"/></svg></button>
  </div>
  <div class="bar d-flex align-items-center flex-shrink-0" role="toolbar">
    <span class="grip"></span>
    <button class="tb" aria-label="CAD tools"><svg class="dim"><use href="#i-ruler"/></svg></button><button class="tb" aria-label="Move"><svg class="dim"><use href="#i-bmove"/></svg></button><span class="tri"></span><button class="tb tight" aria-label="Rotate"><svg class="dim"><use href="#i-brot"/></svg></button><button class="tb tight" aria-label="Scale"><svg class="dim"><use href="#i-bscale"/></svg></button><button class="tb tight" aria-label="Simplify"><svg class="dim"><use href="#i-simp"/></svg></button><button class="tb tight" aria-label="Add ring"><svg class="dim"><use href="#i-ring"/></svg></button><button class="tb tight" aria-label="Add part"><svg class="dim"><use href="#i-part"/></svg></button><button class="tb tight" aria-label="Fill ring"><svg class="dim"><use href="#i-fring"/></svg></button><button class="tb tight" aria-label="Delete ring"><svg class="dim"><use href="#i-dring"/></svg></button><button class="tb tight" aria-label="Delete part"><svg class="dim"><use href="#i-dpart"/></svg></button><button class="tb tight" aria-label="Reshape"><svg class="dim"><use href="#i-resh"/></svg></button><button class="tb tight" aria-label="Offset"><svg class="dim"><use href="#i-offs"/></svg></button><button class="tb tight" aria-label="Reverse"><svg class="dim"><use href="#i-vrot"/></svg></button><button class="tb tight" aria-label="Trim"><svg class="dim"><use href="#i-merge"/></svg></button><button class="tb tight" aria-label="Split features"><svg class="dim"><use href="#i-splitf"/></svg></button><button class="tb tight" aria-label="Split parts"><svg class="dim"><use href="#i-splitf"/></svg></button><button class="tb tight" aria-label="Merge"><svg class="dim"><use href="#i-blob"/></svg></button>
  </div>
  <div class="d-flex flex-fill" style="min-height:0">
    <aside class="dock d-flex flex-column position-relative">
      <div class="dock-title d-flex align-items-center flex-shrink-0"><span class="me-auto">Browser</span><button aria-label="Float"><svg><use href="#i-float"/></svg></button><button aria-label="Close"><svg><use href="#i-close"/></svg></button></div>
      <div class="dock-bar d-flex align-items-center flex-shrink-0">
        <button class="tb" aria-label="Add layers"><svg><use href="#i-addsel"/></svg></button><button class="tb" aria-label="Refresh"><svg><use href="#i-refresh"/></svg></button><button class="tb" aria-label="Filter"><svg><use href="#i-filter"/></svg></button><button class="tb" aria-label="Collapse all"><svg><use href="#i-collapse"/></svg></button><button class="tb" aria-label="Properties"><svg><use href="#i-info"/></svg></button>
      </div>
      <div class="treebox browser-tree d-flex flex-shrink-0">
        <ul class="tree flex-fill">
          <li><span class="twist"></span><svg class="ico"><use href="#i-star"/></svg>Favorites</li>
          <li><span class="twist"><svg><use href="#i-tri-r"/></svg></span><svg class="ico"><use href="#i-bmk"/></svg>Spatial Bookmarks</li>
          <li><span class="twist"><svg><use href="#i-tri-r"/></svg></span><svg class="ico"><use href="#i-home"/></svg>Home</li>
          <li><span class="twist"><svg><use href="#i-tri-r"/></svg></span><svg class="ico"><use href="#i-dir"/></svg>C:\</li>
          <li><span class="twist"><svg><use href="#i-tri-r"/></svg></span><svg class="ico"><use href="#i-dir"/></svg>I:\</li>
          <li><span class="twist"><svg><use href="#i-tri-r"/></svg></span><svg class="ico"><use href="#i-dir"/></svg>P:\</li>
          <li><span class="twist"></span><svg class="ico"><use href="#i-cube"/></svg>GeoPackage</li>
          <li><span class="twist"></span><svg class="ico"><use href="#i-feather"/></svg>SpatiaLite</li>
        </ul>
        <div class="sbar d-flex flex-column" aria-hidden="true"><span class="sbtn"></span><span class="thumb" style="flex:39"></span><span class="groove" style="flex:61"></span><span class="sbtn down"></span></div>
      </div>
      <div class="split-h flex-shrink-0"></div>
      <div class="dock-title d-flex align-items-center flex-shrink-0"><span class="me-auto">Layers</span><button aria-label="Float"><svg><use href="#i-float"/></svg></button><button aria-label="Close"><svg><use href="#i-close"/></svg></button></div>
      <div class="dock-bar d-flex align-items-center flex-shrink-0">
        <button class="tb" aria-label="Styling"><svg><use href="#i-brush"/></svg></button><button class="tb" aria-label="Add group"><svg><use href="#i-addgrp"/></svg></button><button class="tb corner" aria-label="Themes"><svg><use href="#i-eye"/></svg></button><button class="tb corner" aria-label="Filter legend"><svg><use href="#i-filter"/></svg></button><button class="tb" aria-label="Expression filter"><svg class="dim"><use href="#i-eps"/></svg></button><span class="tri"></span><button class="tb" aria-label="Expand all"><svg><use href="#i-expand"/></svg></button><span class="more ms-auto">»</span>
      </div>
      <div class="treebox layers-tree flex-fill">
        <div class="lrow"><span class="twist"></span><input type="checkbox" id="l1" checked><span class="swatch sq-red"></span><div class="lname cur"><label for="l1">output count plot</label><span class="memchip"><svg><use href="#i-chip"/></svg></span></div></div>
        <div class="lrow"><span class="twist"><svg><use href="#i-tri-d"/></svg></span><input type="checkbox" id="l2" checked><svg class="swatch"><use href="#i-raster"/></svg><div class="lname"><label for="l2">output patches</label><span class="memchip"><svg><use href="#i-chip"/></svg></span></div></div>
        <div class="band">Band 1</div>
        <div class="ramp d-flex"><i></i><div class="d-flex flex-column justify-content-between"><span>2,081</span><span>1</span></div></div>
        <div class="lrow"><span class="twist"></span><input type="checkbox" id="l3" checked><span class="swatch sq-black"></span><div class="lname"><label for="l3">output count object</label><span class="memchip"><svg><use href="#i-chip"/></svg></span></div></div>
      </div>
      <div class="split-v position-absolute"></div>
    </aside>
    <div class="mapview flex-fill">
    <svg width="100%" height="100%" viewBox="658 575 1110 1971" preserveAspectRatio="xMinYMin slice" role="img" aria-label="Map">
      <g class="bld" transform="translate(860 900) scale(.33333 .7653)">
        <path fill="#84bfa9" d="M220 107H438V130H486V153H543V312H486V350H543V511H490V640H438V660H490V686H438V747H485V770H543V819H490V884H438V922H490V995H438V1055H490V1104H438V1277H392V1319H438V1429H490V1457H438V1478H390V1501H288V1523H220V1501H172V1479H120V1408H172V1343H120V1321H172V1277H122V1010H172V944H215V884H172V819H120V770H172V615H215V488H172V242H215V180H170V153H220Z"/>
        <g fill="#7ab8ad">
        <path d="M1030 130H1148V180H1080V200H1148V218H1198V269H1080V247H978V220H1028V180H978V153H1030Z"/>
        <path d="M978 285H1148V357H1045V379H978V333H926V309H978Z"/>
        <path d="M978 395H1148V445H1085V460H1148V511H1098V533H978V465H1030V422H978Z"/>
        <path d="M1030 548H1198V600H1148V621H978V572H1030Z"/>
        <path d="M978 636H1096V660H1148V686H1096V709H978Z"/>
        <path d="M1030 724H1148V773H1090V815H1148V835H1198V905H1148V922H1198V995H1096V1083H978V1060H926V967H978V925H1030V905H978V884H926V858H978V815H1030V773H978V748H1030Z"/>
        <path class="pick" d="M926 1123H1045V1147H1096V1190H926V1168H875V1147H926Z"/>
        <path class="pick" d="M926 1233H1045V1279H926Z"/>
        <path class="pick" d="M980 1300H1096V1367H926V1345H875V1322H980Z"/>
        <path d="M926 1408H1096V1457H926Z"/>
        </g>
      </g>
      <g class="bld" transform="translate(1320 900) scale(.33333 .7653)" fill="#7cbaac">
        <path d="M505 107H575V130H627V153H680V178H627V203H525V225H458V156H406V132H505Z"/>
        <path d="M303 240H577V265H527V290H477V312H406V290H355V265H303Z"/>
        <path d="M406 328H475V350H527V373H577V423H355V350H406Z"/>
        <path d="M355 460H577V535H520V550H577V572H620V597H577V620H520V638H577V663H527V709H477V731H406V685H355V662H303V638H355V550H406V487H355Z"/>
        <path d="M303 746H525V772H475V797H355V772H303Z"/>
        <path fill="#76b4ae" d="M355 813H475V835H525V858H577V906H475V1010H525V1060H420V1083H303V1060H253V923H355V906H303V835H355Z"/>
        <path fill="#fff" d="M420 952H450V966H420Z"/>
        <path fill="#76b4ae" d="M303 1098H425V1155H430V1185H477V1231H525V1279H475V1296H525V1345H577V1390H527V1411H477V1456H205V1433H253V1388H310V1368H253V1345H310V1277H253V1255H310V1213H253V1143H303Z"/>
        <path d="M1213 130H1282V153H1360V223H1112V153H1213Z"/>
        <path fill="#80bdab" d="M1112 240H1282V265H1330V288H1360V378H1332V394H1360V468H1332V555H1282V575H1230V638H1282V682H1330V752H1282V797H1230V858H1282V902H1330V928H1282V950H1230V1060H1182V1076H1230V1100H1282V1145H1232V1237H1182V1258H1062V1237H1012V1168H1062V1145H1012V1122H1062V1076H1112V1060H1012V972H962V902H1012V813H1070V797H1012V772H962V748H1012V638H1062V553H1012V528H1062V505H1112V466H1062V265H1112Z"/>
        <path fill="#fff" d="M1128 1150H1168V1164H1128Z"/>
        <path fill="#74b2ad" d="M1112 1274H1230V1298H1280V1345H1182V1362H1230V1385H1280V1433H1230V1456H1182V1478H1062V1456H962V1363H1112V1320H1062V1298H1112Z"/>
      </g>
      <g fill="none" stroke="#e41a1c" stroke-width="11" stroke-linejoin="round">
        <path d="M1118 560L1116 622L1311 637L1314 560"/><path d="M1367 560L1365 630L1555 647L1558 560"/><path d="M1614 560L1612 637L1800 651"/>
        <path d="M1361 691L1555 701L1491 2300L1298 2285Z"/>
        <path d="M1607 697L1800 709M1770 1480L1739 2306L1546 2296L1607 697"/>
        <path d="M1041 2560L1050 2328L1244 2336L1236 2560"/><path d="M1289 2560L1299 2337L1492 2350L1485 2560"/><path d="M1537 2560L1546 2348L1740 2360L1732 2560"/>
        <path stroke="#ff0" stroke-width="12" d="M1113 676L1309 687L1244 2284L1050 2270Z"/>
      </g>
      <g class="num">
        <text x="969" y="1521">1225</text><text x="1223" y="1071">1227</text><text x="1210" y="1164">1243</text><text x="1214" y="1270">1250</text><text x="1223" y="1363">1257</text><text x="1207" y="1431">1261</text><text x="1214" y="1616">1263</text><text x="1192" y="1802">1279</text><text x="1189" y="1876">1283</text><text x="1196" y="1936">1288</text><text x="1198" y="2011">1292</text><text x="1465" y="1014">1226</text><text x="1467" y="1120">1236</text><text x="1472" y="1210">1246</text><text x="1476" y="1365">1254</text><text x="1451" y="1642">1266</text><text x="1451" y="1913">1278</text><text x="1732" y="1058">1228</text><text x="1708" y="1434">1237</text><text x="1698" y="1976">1287</text>
      </g>
      <g class="plotno">
        <text x="1146" y="1493">57</text><text x="1396" y="1477">58</text><text x="1703" y="1487" class="halo">59</text><text x="1086" y="599">71</text><text x="1431" y="623">72</text><text x="1677" y="629">73</text><text x="1167" y="2425">43</text><text x="1416" y="2430">44</text><text x="1663" y="2436">45</text>
      </g>
    </svg>
    </div>
  </div>
  <footer class="status d-flex align-items-center flex-shrink-0"><div class="locate d-flex align-items-center"><svg viewBox="0 0 38 40"><circle cx="16" cy="15" r="13" fill="none" stroke="#888" stroke-width="3.500"/><path d="M24 26l12 13" stroke="#888" stroke-width="4.500"/></svg><input type="text" aria-label="Locate" placeholder="Type to locate (Ctrl+K)"></div></footer>
</section>

<svg class="links position-absolute top-0 start-0 w-100 h-100" viewBox="0 0 3828 2661" preserveAspectRatio="none" aria-hidden="true">
  <defs><marker id="tip" markerUnits="userSpaceOnUse" markerWidth="44" markerHeight="44" refX="6" refY="21" orient="auto-start-reverse"><path d="M0 0L43 21L0 42z" fill="#4472c4"/></marker></defs>
  <g stroke="#4472c4" stroke-width="13" stroke-dasharray="41 14" marker-end="url(#tip)">
    <path d="M2170 645L1337 814"/><path d="M2170 1753L1279 1787"/><path d="M2170 2095L1277 1859"/><path d="M2170 2450L1273 1946"/>
  </g>
</svg>

<section class="side-col d-flex flex-column position-relative">
  <h1 class="banner">Attribute Table:<br>Output Count Plot=57</h1>
  <div class="frame flex-shrink-0">
    <header class="tw-title d-flex align-items-center"><svg class="logo"><use href="#i-q"/></svg><span class="me-auto">output count plot — Features Total: 126, Filtered: 126, Selected: 1</span><button aria-label="Minimize"><svg><use href="#i-min"/></svg></button><button aria-label="Maximize"><svg><use href="#i-max"/></svg></button><button aria-label="Close"><svg><use href="#i-x"/></svg></button></header>
    <div class="tw-bar d-flex align-items-center" role="toolbar">
      <button class="tb on" aria-label="Toggle editing"><svg><use href="#i-pencil"/></svg></button><button class="tb" aria-label="Multi edit"><svg class="dim"><use href="#i-form"/></svg></button><button class="tb" aria-label="Save edits"><svg class="dim"><use href="#i-savep"/></svg></button><button class="tb" aria-label="Reload"><svg><use href="#i-refresh"/></svg></button><span class="vsep"></span><button class="tb" aria-label="Add feature"><svg class="dim"><use href="#i-addfeat"/></svg></button><button class="tb" aria-label="Delete"><svg class="dim"><use href="#i-trash"/></svg></button><button class="tb" aria-label="Cut"><svg class="dim"><use href="#i-cut"/></svg></button><button class="tb" aria-label="Copy"><svg><use href="#i-copy"/></svg></button><button class="tb" aria-label="Paste"><svg class="dim"><use href="#i-paste"/></svg></button><span class="vsep"></span><button class="tb" aria-label="Select by expression"><svg><use href="#i-epssel"/></svg></button><button class="tb" aria-label="Select all"><svg><use href="#i-selall"/></svg></button><button class="tb" aria-label="Invert"><svg><use href="#i-invert"/></svg></button><button class="tb" aria-label="Deselect"><svg><use href="#i-desel"/></svg></button><button class="tb" aria-label="Filter"><svg><use href="#i-filter"/></svg></button><button class="tb" aria-label="Move to top"><svg><use href="#i-movetop"/></svg></button><button class="tb" aria-label="Pan to rows"><svg><use href="#i-pan"/></svg></button><button class="tb" aria-label="Zoom to rows"><svg><use href="#i-zsel"/></svg></button><span class="vsep"></span><button class="tb" aria-label="New field"><svg class="dim"><use href="#i-newfld"/></svg></button><button class="tb" aria-label="Delete field"><svg class="dim"><use href="#i-delfld"/></svg></button><button class="tb" aria-label="Organize columns"><svg><use href="#i-edcol"/></svg></button><button class="tb" aria-label="Field calculator"><svg><use href="#i-abacus"/></svg></button><span class="vsep"></span><button class="tb" aria-label="Conditional formatting"><svg><use href="#i-cond"/></svg></button><span class="vsep"></span><button class="tb" aria-label="Actions"><svg><use href="#i-action"/></svg></button><button class="tb" aria-label="Dock"><svg><use href="#i-dockw"/></svg></button>
    </div>
    <div class="gridwrap short d-flex">
      <div class="gridbox flex-fill">
      <table class="attrs">
        <colgroup><col class="rh"><col class="cc"><col class="cc"><col class="cc"><col class="cc"><col class="cc"><col class="cc"></colgroup>
        <thead><tr><th></th><th>fid</th><th>ID</th><th>area</th><th>perimeter</th><th>count</th><th>mean_width</th></tr></thead>
        <tbody>
        <tr><th>55</th><td>55</td><td>55</td><td>1.213</td><td>11.886</td><td>3</td><td>0.438</td></tr>
        <tr class="alt"><th>56</th><td>56</td><td>56</td><td>0.923</td><td>12.512</td><td>2</td><td>0.406</td></tr>
        <tr class="sel"><th>57</th><td>57</td><td>57</td><td>0.52</td><td>11.636</td><td>10</td><td>0.2</td></tr>
        <tr class="alt"><th>58</th><td>58</td><td>58</td><td>0.724</td><td>12.762</td><td>7</td><td>0.284</td></tr>
        <tr><th>59</th><td>59</td><td>59</td><td>1.01</td><td>12.137</td><td>3</td><td>0.362</td></tr>
        <tr class="alt"><th>60</th><td>60</td><td>60</td><td>0.72</td><td>11.386</td><td>5</td><td>0.263</td></tr>
        <tr><th></th><td></td><td></td><td></td><td></td><td></td><td></td></tr>
        </tbody>
      </table>
      </div>
      <div class="sbar d-flex flex-column" aria-hidden="true"><span class="sbtn"></span><span class="groove" style="flex:168"></span><span class="thumb" style="flex:68"></span><span class="groove" style="flex:206"></span><span class="sbtn down"></span></div>
    </div>
    <footer class="tw-foot d-flex align-items-center"><button class="showall d-flex align-items-center me-auto"><svg><use href="#i-tablev"/></svg>Show All Features</button><button class="viewb" aria-label="Form view"><svg><use href="#i-formv"/></svg></button><button class="viewb on" aria-label="Table view"><svg><use href="#i-tablev"/></svg></button></footer>
  </div>
  <h1 class="banner second">Attribute Table:<br>Output Count Object = 1279, 1283, 1288</h1>
  <div class="frame flex-fill d-flex flex-column" style="min-height:0">
    <header class="tw-title d-flex align-items-center flex-shrink-0"><svg class="logo"><use href="#i-q"/></svg><span class="me-auto">output count object — Features Total: 1558, Filtered: 1558, Selected: 3</span><button aria-label="Minimize"><svg><use href="#i-min"/></svg></button><button aria-label="Maximize"><svg><use href="#i-max"/></svg></button><button aria-label="Close"><svg><use href="#i-x"/></svg></button></header>
    <div class="tw-bar d-flex align-items-center flex-shrink-0" role="toolbar">
      <button class="tb" aria-label="Toggle editing"><svg><use href="#i-pencil"/></svg></button><button class="tb" aria-label="Multi edit"><svg class="dim"><use href="#i-form"/></svg></button><button class="tb" aria-label="Save edits"><svg class="dim"><use href="#i-savep"/></svg></button><button class="tb" aria-label="Reload"><svg><use href="#i-refresh"/></svg></button><span class="vsep"></span><button class="tb" aria-label="Add feature"><svg class="dim"><use href="#i-addfeat"/></svg></button><button class="tb" aria-label="Delete"><svg class="dim"><use href="#i-trash"/></svg></button><button class="tb" aria-label="Cut"><svg class="dim"><use href="#i-cut"/></svg></button><button class="tb" aria-label="Copy"><svg><use href="#i-copy"/></svg></button><button class="tb" aria-label="Paste"><svg class="dim"><use href="#i-paste"/></svg></button><span class="vsep"></span><button class="tb" aria-label="Select by expression"><svg><use href="#i-epssel"/></svg></button><button class="tb" aria-label="Select all"><svg><use href="#i-selall"/></svg></button><button class="tb" aria-label="Invert"><svg><use href="#i-invert"/></svg></button><button class="tb" aria-label="Deselect"><svg><use href="#i-desel"/></svg></button><button class="tb" aria-label="Filter"><svg><use href="#i-filter"/></svg></button><button class="tb" aria-label="Move to top"><svg><use href="#i-movetop"/></svg></button><button class="tb" aria-label="Pan to rows"><svg><use href="#i-pan"/></svg></button><button class="tb" aria-label="Zoom to rows"><svg><use href="#i-zsel"/></svg></button><span class="vsep"></span><button class="tb" aria-label="New field"><svg class="dim"><use href="#i-newfld"/></svg></button><button class="tb" aria-label="Delete field"><svg class="dim"><use href="#i-delfld"/></svg></button><button class="tb" aria-label="Organize columns"><svg><use href="#i-edcol"/></svg></button><button class="tb" aria-label="Field calculator"><svg><use href="#i-abacus"/></svg></button><span class="vsep"></span><button class="tb" aria-label="Conditional formatting"><svg><use href="#i-cond"/></svg></button><span class="vsep"></span><button class="tb" aria-label="Actions"><svg><use href="#i-action"/></svg></button><button class="tb" aria-label="Dock"><svg><use href="#i-dockw"/></svg></button>
    </div>
    <div class="gridwrap flex-fill d-flex">
      <div class="gridbox flex-fill">
      <table class="attrs wide">
        <colgroup><col class="rh"><col class="cc"><col class="cc"><col class="cc"><col class="cc"><col class="cc"></colgroup>
        <thead><tr><th></th><th>fid</th><th>ID</th><th>area</th><th>perimeter</th><th>width</th></tr></thead>
        <tbody>
        <tr class="alt"><th>1278</th><td>1278</td><td>1278</td><td>0.23868683459…</td><td>3.50335999974…</td><td>0.42703383435…</td></tr>
        <tr class="sel"><th>1279</th><td>1279</td><td>1279</td><td>0.03521528997…</td><td>0.87584000092…</td><td>0.18768000043…</td></tr>
        <tr class="alt"><th>1280</th><td>1280</td><td>1280</td><td>0.13303946207…</td><td>2.25216000084…</td><td>0.37536000000…</td></tr>
        <tr><th>1281</th><td>1281</td><td>1281</td><td>0.01956465922…</td><td>0.62559999909…</td><td>0.12512000004…</td></tr>
        <tr class="alt"><th>1282</th><td>1282</td><td>1282</td><td>0.03130390979…</td><td>0.87583999894…</td><td>0.18767999950…</td></tr>
        <tr class="sel"><th>1283</th><td>1283</td><td>1283</td><td>0.01565030015…</td><td>0.50047999992…</td><td>0.12511999998…</td></tr>
        <tr class="alt"><th>1284</th><td>1284</td><td>1284</td><td>0.15652009481…</td><td>3.00287999887…</td><td>0.37158744189…</td></tr>
        <tr><th>1285</th><td>1285</td><td>1285</td><td>0.15260268984…</td><td>2.50239999976…</td><td class="focus-cell">0.37536000000…</td></tr>
        <tr class="alt"><th>1286</th><td>1286</td><td>1286</td><td>0.08607917201…</td><td>1.50143999885…</td><td>0.31279999995…</td></tr>
        <tr><th>1287</th><td>1287</td><td>1287</td><td>0.13303787408…</td><td>2.25215999898…</td><td>0.37536000000…</td></tr>
        <tr class="sel"><th>1288</th><td>1288</td><td>1288</td><td>0.03521601033…</td><td>0.87584000092…</td><td>0.18768000043…</td></tr>
        <tr><th>1289</th><td>1289</td><td>1289</td><td>0.42650541355…</td><td>3.62848000053…</td><td>0.50047999998…</td></tr>
        </tbody>
      </table>
      </div>
      <div class="sbar d-flex flex-column" aria-hidden="true"><span class="sbtn"></span><span class="groove" style="flex:690"></span><span class="thumb" style="flex:68"></span><span class="groove" style="flex:148"></span><span class="sbtn down"></span></div>
    </div>
    <footer class="tw-foot d-flex align-items-center flex-shrink-0"><button class="showall d-flex align-items-center me-auto"><svg><use href="#i-tablev"/></svg>Show All Features</button><button class="viewb" aria-label="Form view"><svg><use href="#i-formv"/></svg></button><button class="viewb on" aria-label="Table view"><svg><use href="#i-tablev"/></svg></button></footer>
  </div>
</section>
</main>
</body>
</html>
